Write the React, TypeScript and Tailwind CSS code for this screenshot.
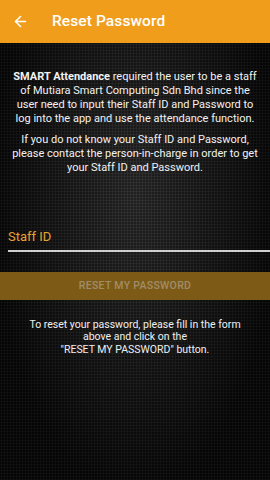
import { ArrowLeft } from "lucide-react";

export default function App() {
    return (
        <div className="w-[270px] h-[480px] flex flex-col overflow-hidden font-['Roboto',sans-serif] bg-[#0c0c0c]">
            <header className="h-[43px] shrink-0 bg-[#f09d1c] flex items-center">
                <ArrowLeft className="w-[17px] h-[17px] text-white ml-[12px]" strokeWidth={2.2} />
                <span className="ml-[23px] text-white text-[15.5px] font-medium tracking-[0.1px]">Reset Password</span>
            </header>

            <main className="flex-1 flex flex-col bg-[radial-gradient(ellipse_at_50%_35%,rgba(70,70,70,0.35),rgba(0,0,0,0.6)_75%),radial-gradient(circle,#2c2c2c_0.8px,transparent_1.4px)] bg-[length:100%_100%,3px_3px]">
                <div className="pt-[27px] px-[13px] text-center text-[#f2f2f2] text-[11px] leading-[14px]">
                    <p>
                        <b className="font-bold">SMART Attendance</b> required the user to be a staff of Mutiara Smart Computing Sdn Bhd since the user need to input their Staff ID and Password to log into the app and use the attendance function.
                    </p>
                    <p className="mt-[7px] -mx-[4px]">
                        If you do not know your Staff ID and Password, please contact the person-in-charge in order to get your Staff ID and Password.
                    </p>
                </div>

                <div className="mt-[54px] pl-[8px]">
                    <div className="text-[#e9a234] text-[13px] leading-[16px]">Staff ID</div>
                    <div className="mt-[5px] h-[1.5px] bg-[#cfcfcf]" />
                </div>

                <button className="mt-[20px] h-[28px] w-full bg-[#7d5b17] text-[#a08d68] text-[10.5px] font-medium tracking-[0.3px]">
                    RESET MY PASSWORD
                </button>

                <p className="mt-[19px] px-[24px] text-center text-[#f0f0f0] text-[10.5px] leading-[12.5px]">
                    To reset your password, please fill in the form above and click on the<br />"RESET MY PASSWORD" button.
                </p>
            </main>
        </div>
    );
}
